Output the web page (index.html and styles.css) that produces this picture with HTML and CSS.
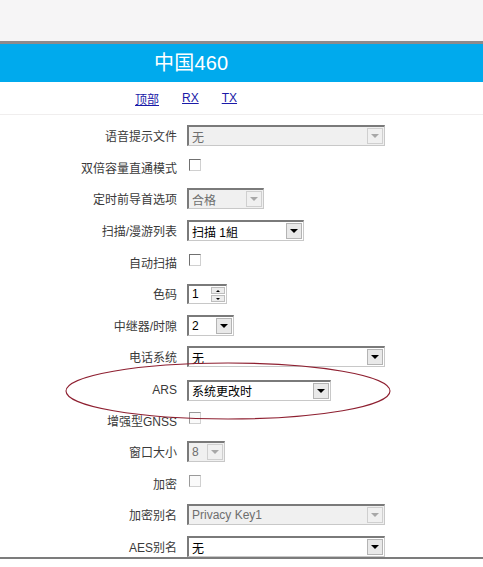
FILE: index.html
```html
<!DOCTYPE html>
<html lang="zh">
<head>
<meta charset="utf-8">
<link rel="stylesheet" href="styles.css">
</head>
<body>
<div class="chrome"></div>
<div class="banner"><span class="title">中国460</span></div>
<div class="nav">
  <a href="#">顶部</a>
  <a href="#">RX</a>
  <a href="#">TX</a>
</div>
<div class="form">
  <div class="row"><span class="label">语音提示文件</span><span class="sel dis w-long"><span class="val">无</span><span class="arr"></span></span></div>
  <div class="row"><span class="label">双倍容量直通模式</span><span class="chk"></span></div>
  <div class="row"><span class="label">定时前导首选项</span><span class="sel dis w-77"><span class="val">合格</span><span class="arr"></span></span></div>
  <div class="row"><span class="label">扫描/漫游列表</span><span class="sel w-117"><span class="val">扫描 1組</span><span class="arr"></span></span></div>
  <div class="row"><span class="label">自动扫描</span><span class="chk"></span></div>
  <div class="row"><span class="label">色码</span><span class="spin"><span class="val">1</span><span class="btns"><span class="up"></span><span class="dn"></span></span></span></div>
  <div class="row"><span class="label">中继器/时隙</span><span class="sel w-47"><span class="val">2</span><span class="arr"></span></span></div>
  <div class="row"><span class="label">电话系统</span><span class="sel w-long"><span class="val">无</span><span class="arr"></span></span></div>
  <div class="row row-ars"><span class="label">ARS</span><span class="sel w-144"><span class="val">系统更改时</span><span class="arr"></span></span></div>
  <div class="row"><span class="label">增强型GNSS</span><span class="chk dis"></span></div>
  <div class="row"><span class="label">窗口大小</span><span class="sel dis w-38"><span class="val">8</span><span class="arr"></span></span></div>
  <div class="row"><span class="label">加密</span><span class="chk dis"></span></div>
  <div class="row"><span class="label">加密别名</span><span class="sel dis w-long"><span class="val">Privacy Key1</span><span class="arr"></span></span></div>
  <div class="row"><span class="label">AES别名</span><span class="sel w-long"><span class="val">无</span><span class="arr"></span></span></div>
  <svg class="ring" width="330" height="62" viewBox="0 0 330 62"><ellipse cx="163" cy="31" rx="162" ry="28" fill="none" stroke="#8e1f30" stroke-width="1.1"/></svg>
</div>
<div class="footer"></div>
</body>
</html>
```

FILE: styles.css
```css
html, body {
  margin: 0;
  padding: 0;
  background: #ffffff;
}
body {
  width: 483px;
  height: 567px;
  overflow: hidden;
  font-family: "Liberation Sans", "Noto Sans CJK SC", sans-serif;
  font-size: 12px;
  color: #333;
}
.chrome {
  height: 41px;
  background: #f6f5f6;
  border-bottom: 3px solid #8c8a8c;
}
.banner {
  height: 38px;
  background: #00aaed;
  display: flex;
  align-items: center;
  padding-left: 154px;
}
.title {
  color: #fff;
  font-size: 20px;
  line-height: 1;
  letter-spacing: 0.2px;
}
.nav {
  height: 32px;
  display: flex;
  align-items: center;
  gap: 23px;
  padding-left: 135px;
  border-bottom: 1px solid #f0eeee;
}
.nav a {
  color: #1a1aa8;
  font-size: 12px;
  text-decoration: underline;
}
.form {
  position: relative;
  height: 442px;
  overflow: hidden;
  padding-top: 5px;
  box-sizing: border-box;
}
.row {
  height: 31.6px;
  display: flex;
  align-items: center;
}
.row-ars {
  padding-top: 3px;
  box-sizing: border-box;
}
.label {
  width: 177px;
  text-align: right;
  padding-right: 10px;
  box-sizing: content-box;
  flex: none;
  color: #3a3a3a;
  white-space: nowrap;
}
.sel {
  height: 21px;
  box-sizing: border-box;
  display: flex;
  align-items: center;
  border-top: 2px solid #7a7a7a;
  border-left: 2px solid #7a7a7a;
  border-right: 1px solid #c8c8c8;
  border-bottom: 1px solid #c8c8c8;
  background: #fff;
  color: #000;
  flex: none;
}
.sel .val {
  flex: 1;
  padding-left: 3px;
  white-space: nowrap;
  overflow: hidden;
}
.sel .arr {
  width: 16px;
  height: 16px;
  margin-right: 1px;
  box-sizing: border-box;
  border: 1px solid #b4b4b4;
  background: #e9e9e9;
  position: relative;
  flex: none;
}
.sel .arr::after {
  content: "";
  position: absolute;
  left: 3px;
  top: 5px;
  border-left: 4px solid transparent;
  border-right: 4px solid transparent;
  border-top: 4px solid #000;
}
.sel.dis {
  background: #f0f0f0;
  color: #6e6e6e;
}
.sel.dis .arr {
  background: #f0f0f0;
  border-color: #cfcfcf;
}
.sel.dis .arr::after {
  border-top-color: #a8a8a8;
}
.w-long { width: 198px; }
.w-77 { width: 77px; }
.w-117 { width: 117px; }
.w-47 { width: 47px; }
.w-144 { width: 144px; }
.w-38 { width: 38px; }
.chk {
  width: 12px;
  height: 12px;
  margin-left: 2px;
  margin-top: -4px;
  box-sizing: border-box;
  border-top: 1px solid #707070;
  border-left: 1px solid #707070;
  border-right: 1px solid #d0d0d0;
  border-bottom: 1px solid #d0d0d0;
  background: #fff;
}
.chk.dis {
  border-top-color: #9a9a9a;
  border-left-color: #9a9a9a;
  background: #fafafa;
}
.spin {
  width: 40px;
  height: 20px;
  box-sizing: border-box;
  display: flex;
  align-items: stretch;
  border-top: 2px solid #7a7a7a;
  border-left: 2px solid #7a7a7a;
  border-right: 1px solid #c8c8c8;
  border-bottom: 1px solid #c8c8c8;
  background: #fff;
  color: #000;
}
.spin .val {
  flex: 1;
  padding-left: 3px;
  display: flex;
  align-items: center;
}
.spin .btns {
  width: 14px;
  display: flex;
  flex-direction: column;
  margin: 1px 1px 1px 0;
  gap: 1px;
}
.spin .up, .spin .dn {
  flex: 1;
  background: #ececec;
  border: 1px solid #bdbdbd;
  position: relative;
}
.spin .up::after, .spin .dn::after {
  content: "";
  position: absolute;
  left: 4px;
  top: 2px;
  border-left: 2px solid transparent;
  border-right: 2px solid transparent;
}
.spin .up::after { border-bottom: 2px solid #000; }
.spin .dn::after { border-top: 2px solid #000; }
.ring {
  position: absolute;
  left: 65px;
  top: 245px;
  pointer-events: none;
}
.footer {
  height: 9px;
  border-top: 2px solid #7c7c7c;
  background: #fff;
}
```
